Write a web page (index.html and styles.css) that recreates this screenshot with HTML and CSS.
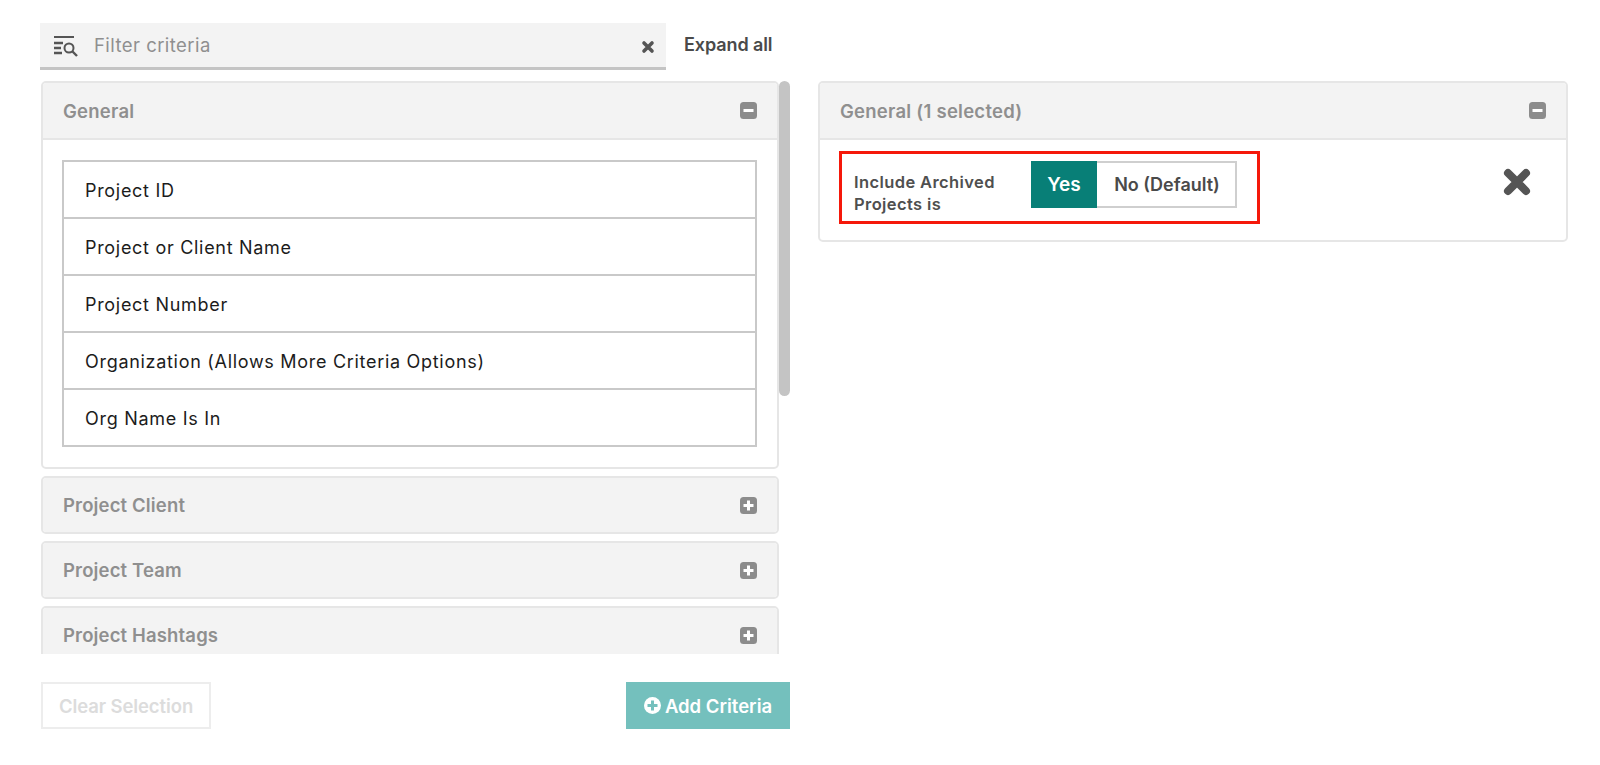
FILE: index.html
```html
<!DOCTYPE html>
<html lang="en">
<head>
<meta charset="utf-8">
<title>Filter criteria</title>
<link rel="stylesheet" href="styles.css">
</head>
<body>
<main class="page">
  <section class="left">
    <div class="filter-row">
      <div class="filter">
        <svg class="filter-icon" width="26" height="22" viewBox="0 0 26 22"><g fill="none" stroke="#555"><path d="M1 2h20" stroke-width="2"/><path d="M1 8h9M1 13h7M1 18h8" stroke-width="2.4"/><circle cx="16" cy="13" r="4.5" stroke-width="2"/><path d="M19.5 16.5l4.5 4.5" stroke-width="2.4"/></g></svg>
        <span class="filter-text">Filter criteria</span>
        <svg class="x-small" width="14" height="14" viewBox="0 0 14 14"><path d="M3 3l8 8M11 3l-8 8" stroke="#555" stroke-width="3.6" stroke-linecap="round"/></svg>
      </div>
      <span class="expand">Expand all</span>
    </div>
    <div class="scroll-wrap">
      <div class="scroll-area">
        <div class="panel">
          <div class="panel-head"><span>General</span><svg class="toggle-icon" width="17" height="17" viewBox="0 0 17 17"><rect width="17" height="17" rx="3.5" fill="#8c8c8c"/><path d="M3.5 8.5h10" stroke="#fff" stroke-width="3"/></svg></div>
          <div class="panel-body">
            <ul class="criteria">
              <li>Project ID</li>
              <li>Project or Client Name</li>
              <li>Project Number</li>
              <li>Organization (Allows More Criteria Options)</li>
              <li>Org Name Is In</li>
            </ul>
          </div>
        </div>
        <div class="panel collapsed">
          <div class="panel-head"><span>Project Client</span><svg class="toggle-icon" width="17" height="17" viewBox="0 0 17 17"><rect width="17" height="17" rx="3.5" fill="#8c8c8c"/><path d="M3.5 8.5h10M8.5 3.5v10" stroke="#fff" stroke-width="3"/></svg></div>
        </div>
        <div class="panel collapsed">
          <div class="panel-head"><span>Project Team</span><svg class="toggle-icon" width="17" height="17" viewBox="0 0 17 17"><rect width="17" height="17" rx="3.5" fill="#8c8c8c"/><path d="M3.5 8.5h10M8.5 3.5v10" stroke="#fff" stroke-width="3"/></svg></div>
        </div>
        <div class="panel collapsed">
          <div class="panel-head"><span>Project Hashtags</span><svg class="toggle-icon" width="17" height="17" viewBox="0 0 17 17"><rect width="17" height="17" rx="3.5" fill="#8c8c8c"/><path d="M3.5 8.5h10M8.5 3.5v10" stroke="#fff" stroke-width="3"/></svg></div>
        </div>
      </div>
      <div class="scrollbar"></div>
    </div>
    <div class="actions">
      <button class="btn-clear" type="button">Clear Selection</button>
      <button class="btn-add" type="button"><svg width="17" height="17" viewBox="0 0 17 17"><circle cx="8.5" cy="8.5" r="8.5" fill="#fff"/><path d="M3.5 8.5h10M8.5 3.5v10" stroke="#74c0bd" stroke-width="3"/></svg>Add Criteria</button>
    </div>
  </section>
  <section class="right">
    <div class="panel">
      <div class="panel-head"><span>General (1 selected)</span><svg class="toggle-icon" width="17" height="17" viewBox="0 0 17 17"><rect width="17" height="17" rx="3.5" fill="#8c8c8c"/><path d="M3.5 8.5h10" stroke="#fff" stroke-width="3"/></svg></div>
      <div class="selected-body">
        <div class="highlight">
          <span class="sel-label">Include Archived Projects is</span>
          <div class="seg">
            <span class="seg-yes">Yes</span>
            <span class="seg-no">No (Default)</span>
          </div>
        </div>
        <svg class="x-large" width="28" height="28" viewBox="0 0 28 28"><path d="M5 5l18 18M23 5L5 23" stroke="#555" stroke-width="8" stroke-linecap="round"/></svg>
      </div>
    </div>
  </section>
</main>
</body>
</html>
```

FILE: styles.css
```css
* { box-sizing: border-box; }
html, body { margin: 0; height: 100%; background: #fff; overflow: hidden; }
body { font-family: Inter, "Liberation Sans", sans-serif; color: #4a4a4a; }
.page { display: flex; gap: 28px; padding: 23px 32px 0 40px; }
.left { width: 750px; flex: none; }
.right { flex: 1; padding-top: 58px; min-width: 0; }

.filter-row { display: flex; align-items: center; height: 47px; }
.filter { width: 626px; height: 47px; background: #f3f3f3; border-bottom: 3px solid #c4c4c4; display: flex; align-items: center; padding: 0 11px 0 13px; }
.filter-icon { flex: none; margin-top: 2px; }
.filter-text { flex: 1; margin-left: 15px; font-size: 18.5px; color: #8f8f8f; letter-spacing: .45px; }
.x-small { flex: none; margin-top: 3px; }
.expand { margin: 0 0 4px 18px; font-size: 18px; font-weight: 600; color: #4a4a4a; letter-spacing: -.1px; }

.scroll-wrap { position: relative; margin-top: 11px; }
.scroll-area { height: 573px; overflow: hidden; width: 739px; padding-left: 1px; display: flex; flex-direction: column; gap: 7px; }
.scrollbar { position: absolute; top: 0; left: 739px; width: 11px; height: 315px; background: #c4c4c4; border-radius: 6px; }

.panel { flex: none; border: 2px solid #e6e6e6; border-radius: 5px; background: #fff; overflow: hidden; }
.panel-head { height: 57px; background: #f3f3f3; border-bottom: 2px solid #e6e6e6; display: flex; align-items: center; justify-content: space-between; padding: 0 20px; font-size: 18.5px; font-weight: 600; color: #8f8f8f; letter-spacing: .25px; }
.collapsed .panel-head { border-bottom: 0; height: 54px; letter-spacing: .15px; }
.toggle-icon { flex: none; }
.panel-body { padding: 20px 20px 20px 19px; }

.criteria { list-style: none; margin: 0; padding: 0; border: 2px solid #c9c9c9; border-bottom-width: 1px; }
.criteria li { height: 57px; display: flex; align-items: center; padding: 2px 0 0 21px; font-size: 18px; color: #1c1c1c; letter-spacing: .7px; border-bottom: 2px solid #c9c9c9; }
.criteria li:last-child { height: 56px; border-bottom-width: 1px; }

.actions { display: flex; justify-content: space-between; margin-top: 28px; }
.btn-clear, .btn-add { height: 47px; font: 600 18.5px Inter, "Liberation Sans", sans-serif; }
.btn-clear { width: 170px; margin-left: 1px; background: #fff; border: 2px solid #ededed; color: #dcdcdc; letter-spacing: -.1px; padding: 0; }
.btn-add { width: 164px; background: #74c0bd; border: 0; color: #fff; display: flex; align-items: center; justify-content: center; gap: 4px; padding: 0; }

.selected-body { height: 100px; display: flex; align-items: flex-start; justify-content: space-between; padding: 11px 35px 0 19px; }
.highlight { width: 421px; height: 73px; border: 3px solid #f5180a; display: flex; align-items: center; padding: 0 21px 0 12px; }
.sel-label { width: 177px; flex: none; margin-top: 11px; font-size: 16.5px; line-height: 22px; font-weight: 600; color: #4f4f4f; letter-spacing: .4px; }
.seg { display: flex; flex: none; height: 47px; width: 206px; margin-bottom: 6px; border: 2px solid #cfcfcf; font-size: 18px; font-weight: 600; }
.seg-yes { width: 66px; margin: -2px 0 -2px -2px; background: #087f77; color: #fff; display: flex; align-items: center; justify-content: center; font-size: 19px; }
.seg-no { flex: 1; display: flex; align-items: center; justify-content: center; padding-left: 2px; color: #4a4a4a; }
.x-large { flex: none; margin-top: 17px; }
```
